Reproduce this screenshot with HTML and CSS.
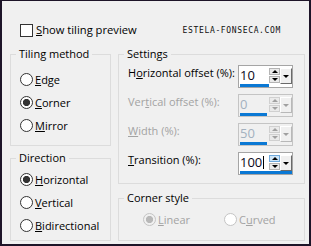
FILE: index.html
```html
<!DOCTYPE html>
<html>
<head>
<meta charset="utf-8">
<link rel="stylesheet" href="styles.css">
</head>
<body>
<div class="dialog">
  <div class="top">
    <div class="check"><span class="box"></span><span><u>S</u>how tiling preview</span></div>
    <span class="mark">ESTELA-FONSECA.COM</span>
  </div>
  <div class="cols">
    <div class="col left">
      <div class="group tiling">
        <div class="title">Tiling method</div>
        <div class="opts">
          <div class="opt"><span class="radio"></span><span><u>E</u>dge</span></div>
          <div class="opt"><span class="radio on"></span><span><u>C</u>orner</span></div>
          <div class="opt"><span class="radio"></span><span><u>M</u>irror</span></div>
        </div>
      </div>
      <div class="group direction">
        <div class="title">Direction</div>
        <div class="opts">
          <div class="opt"><span class="radio on"></span><span><u>H</u>orizontal</span></div>
          <div class="opt"><span class="radio"></span><span><u>V</u>ertical</span></div>
          <div class="opt"><span class="radio"></span><span><u>B</u>idirectional</span></div>
        </div>
      </div>
    </div>
    <div class="col right">
      <div class="group settings">
        <div class="title">Settings</div>
        <div class="rows">
          <div class="row">
            <span class="lbl">H<u>o</u>rizontal offset (%):</span>
            <div class="spin">
              <span class="val">10</span>
              <div class="ud"><span class="btn up"></span><span class="btn dn"></span></div>
              <span class="drop"></span>
              <span class="bar"></span>
            </div>
          </div>
          <div class="row dis">
            <span class="lbl">Ver<u>t</u>ical offset (%):</span>
            <div class="spin">
              <span class="val">0</span>
              <div class="ud"><span class="btn up"></span><span class="btn dn"></span></div>
              <span class="drop"></span>
              <span class="bar"></span>
            </div>
          </div>
          <div class="row dis">
            <span class="lbl"><u>W</u>idth (%):</span>
            <div class="spin">
              <span class="val">50</span>
              <div class="ud"><span class="btn up"></span><span class="btn dn"></span></div>
              <span class="drop"></span>
              <span class="bar"></span>
            </div>
          </div>
          <div class="row active">
            <span class="lbl"><u>T</u>ransition (%):</span>
            <div class="spin">
              <span class="val">100<span class="caret"></span></span>
              <div class="ud"><span class="btn up"></span><span class="btn dn"></span></div>
              <span class="drop"></span>
              <span class="bar"></span>
            </div>
          </div>
        </div>
      </div>
      <div class="group corner dis">
        <div class="title">Corner style</div>
        <div class="copts">
          <div class="opt first"><span class="radio on"></span><span><u>L</u>inear</span></div>
          <div class="opt"><span class="radio"></span><span>C<u>u</u>rved</span></div>
        </div>
      </div>
    </div>
  </div>
</div>
</body>
</html>
```
FILE: styles.css
```css
* { box-sizing: border-box; }
html, body { margin: 0; padding: 0; }
body {
  width: 311px;
  height: 246px;
  overflow: hidden;
  background: #1d1428;
  font-family: "Open Sans", "Noto Sans", sans-serif;
  font-size: 11px;
  color: #000;
}
u { text-underline-offset: 1px; }

.dialog {
  width: 311px;
  height: 246px;
  background: #f0f0f0;
  border-style: solid;
  border-color: #1d1428;
  border-width: 1px 2px 2px 2px;
  padding: 17px 4px 0 8px;
}

.top {
  height: 24px;
  display: flex;
  align-items: center;
  justify-content: space-between;
  padding: 0 24px 0 10px;
}
.check { display: flex; align-items: center; gap: 3px; line-height: 16px; font-size: 11.2px; }
.box {
  width: 13px;
  height: 13px;
  border: 1px solid #333;
  background: #fff;
}
.mark {
  font-family: "DejaVu Sans Mono", monospace;
  font-size: 8px;
  letter-spacing: 0.65px;
  color: #111;
  line-height: 12px;
  padding-top: 1px;
}

.cols {
  display: flex;
  gap: 7px;
  margin-top: 12px;
}
.col { display: flex; flex-direction: column; }
.left { width: 101px; gap: 12px; }
.right { width: 187px; gap: 14px; }

.group { border: 1px solid #dcdcdc; }
.title {
  width: max-content;
  margin: -9px 0 0 5px;
  padding: 0 3px;
  line-height: 16px;
  height: 16px;
  background: #f0f0f0;
}

.opts { display: flex; flex-direction: column; }
.tiling .opts { padding: 6px 0 8px 9px; }
.direction .opts { padding: 2px 0 3px 9px; }
.opt {
  height: 23px;
  display: flex;
  align-items: center;
  gap: 2px;
  line-height: 16px;
}
.radio {
  width: 13px;
  height: 13px;
  border: 1px solid #333;
  border-radius: 50%;
  background: #fff;
  flex: none;
}
.radio.on { background: radial-gradient(circle, #333 0 3.3px, #fff 3.9px); }

.settings .rows { padding: 3px 11px 2px 9px; }
.row {
  height: 29px;
  display: grid;
  grid-template-columns: 1fr 55px;
  align-items: start;
}
.lbl { line-height: 16px; }
.row.dis .lbl { color: #a3a3a3; }

.spin {
  height: 23px;
  border: 1px solid #a5a5a5;
  background: #fff;
  display: grid;
  grid-template-columns: 30px 11px 12px;
  grid-template-rows: 18px 3px;
}
.val {
  grid-row: 1;
  grid-column: 1;
  font-size: 13px;
  line-height: 17px;
  padding-left: 1px;
  color: #0c0820;
  display: flex;
  align-items: center;
}
.bar {
  grid-row: 2;
  grid-column: 1;
  margin-left: 1px;
  background: #0a78d4;
}
.ud {
  grid-row: 1 / 3;
  grid-column: 2;
  display: flex;
  flex-direction: column;
  gap: 1px;
  padding-top: 2px;
}
.btn {
  width: 11px;
  height: 7px;
  border: 1px solid #b4b4b4;
  background: #eaeaea;
  display: flex;
  align-items: center;
  justify-content: center;
}
.btn::after {
  content: "";
  border-left: 3px solid transparent;
  border-right: 3px solid transparent;
}
.up::after { border-bottom: 3px solid #000; }
.dn::after { border-top: 3px solid #000; }
.drop {
  grid-row: 1 / 3;
  grid-column: 3;
  margin-top: 2px;
  height: 16px;
  background: #f0f0f0;
  border: 1px solid;
  border-color: #fff #6a6a6a #6a6a6a #fff;
  display: flex;
  align-items: center;
  justify-content: center;
}
.drop::after {
  content: "";
  border-left: 3px solid transparent;
  border-right: 3px solid transparent;
  border-top: 3px solid #000;
}

.row.dis .spin { background: #f0f0f0; border-color: #c4c4c4; }
.row.dis .val { color: #a3b1bf; }
.row.dis .bar { margin-right: 2px; }
.row.dis .btn { border-color: #d0d0d0; }
.row.dis .up::after { border-bottom-color: #a0a0a0; }
.row.dis .dn::after { border-top-color: #a0a0a0; }
.row.dis .drop { border-color: #fff #b8b8b8 #b8b8b8 #fff; }
.row.dis .drop::after { border-top-color: #a0a0a0; }

.row.active .bar { grid-column: 1 / 4; }
.row.active .up { background: #cfe6f8; border-color: #6fa9dc; }
.caret {
  display: inline-block;
  width: 1px;
  height: 13px;
  margin-left: 1px;
  background: #000;
}

.corner .copts {
  display: flex;
  padding: 2px 0 9px 24px;
}
.corner .opt.first { width: 81px; }
.corner .opt { color: #a3a3a3; }
.corner .radio { border-color: #c4c4c4; background: #fff; }
.corner .radio.on { background: radial-gradient(circle, #b8b8b8 0 3.3px, #f0f0f0 3.9px); }
```
